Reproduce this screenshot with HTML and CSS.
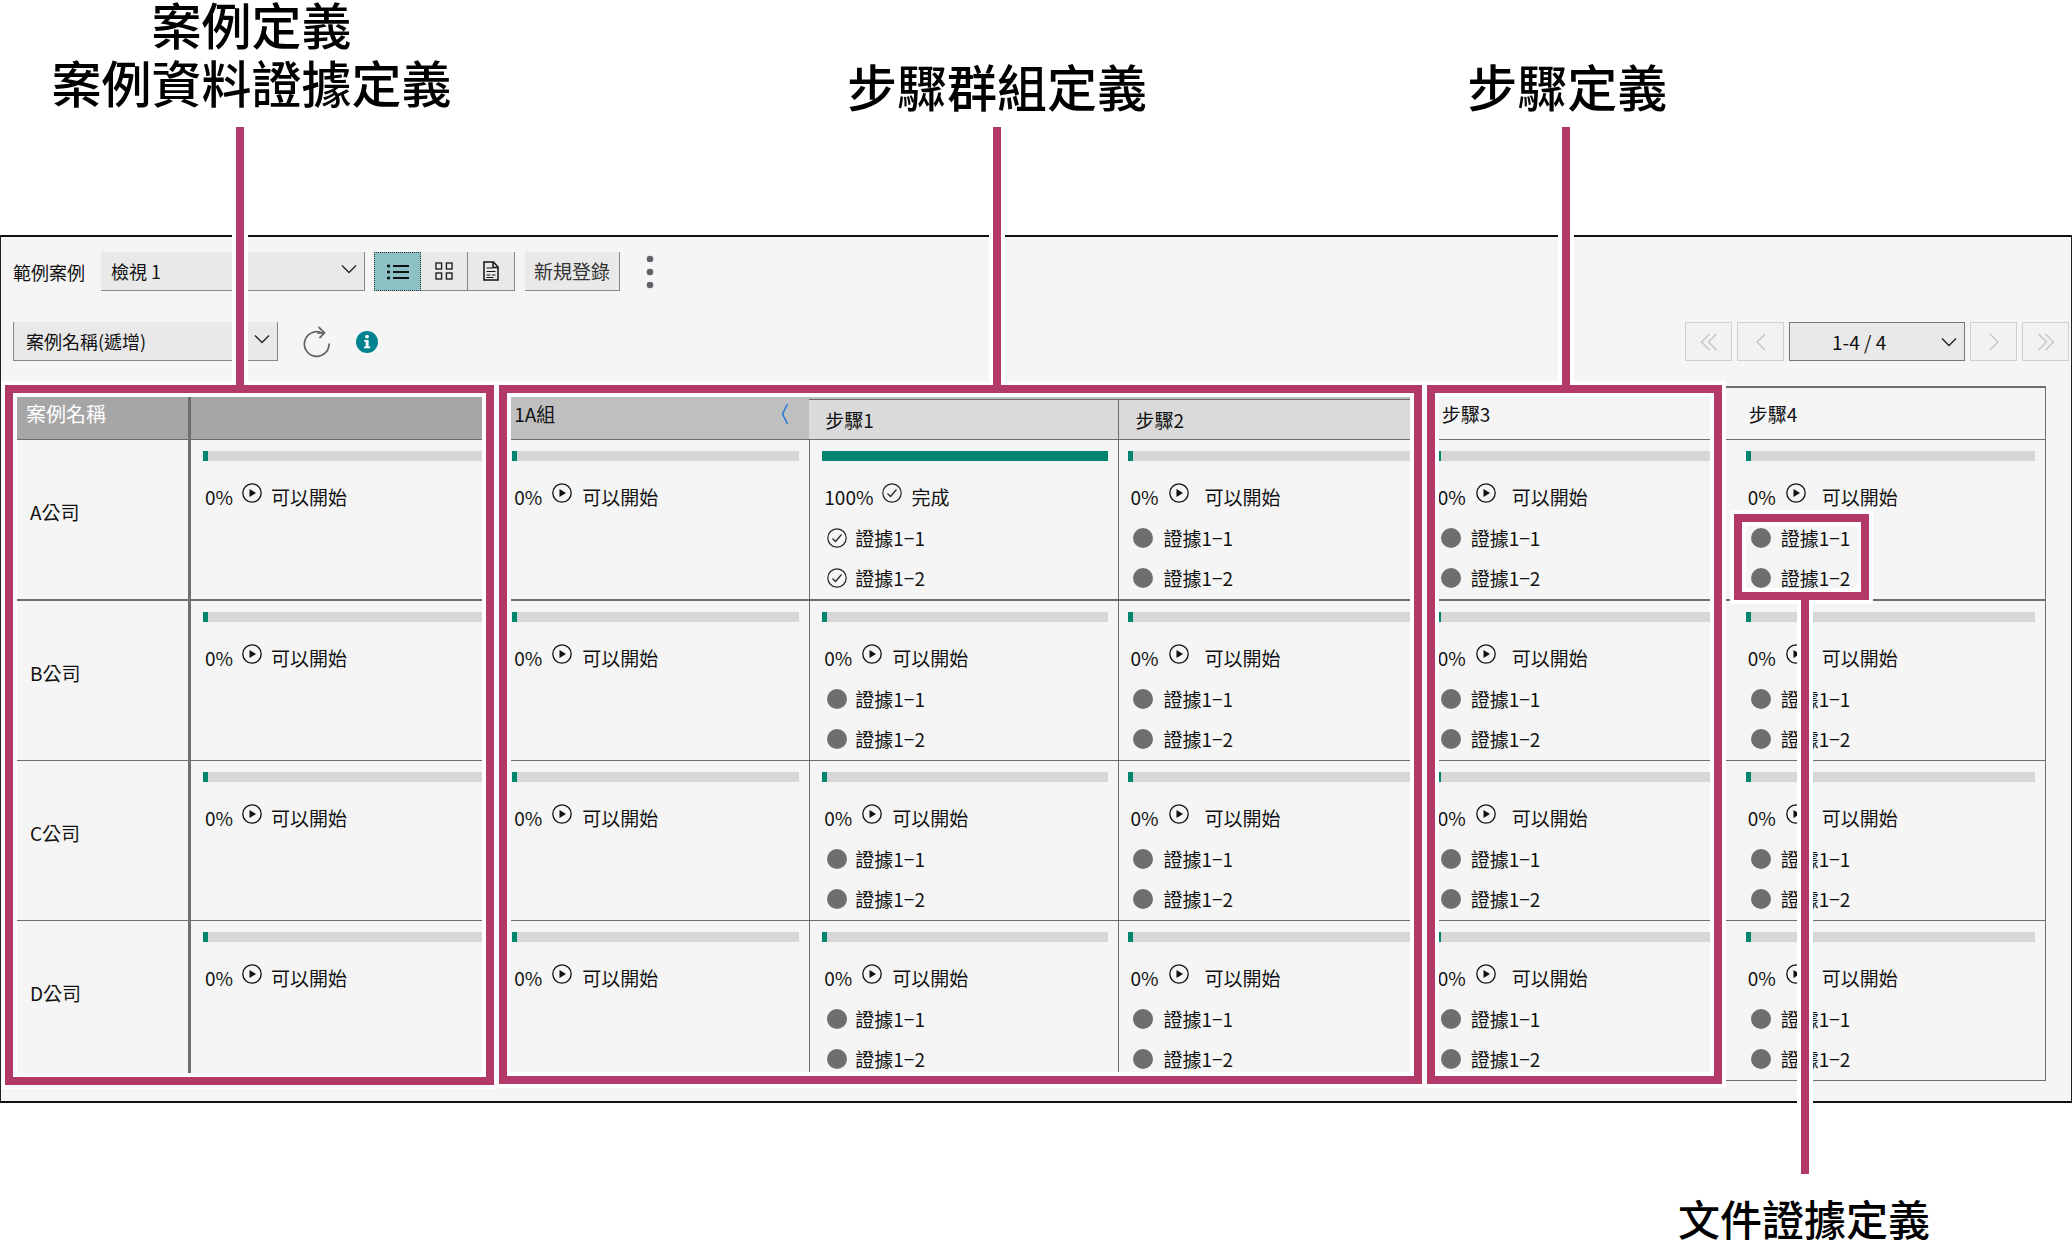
FILE: index.html
```html
<!DOCTYPE html>
<html lang="zh-Hant">
  <head>
    <meta charset="utf-8" />
    <meta name="viewport" content="width=device-width, initial-scale=1.0" />
    <title>範例案例</title>
    <link rel="stylesheet" href="styles.css">
  </head>
  <body>
    <!-- shared icons -->
    <svg class="sprite" aria-hidden="true">
      <symbol id="play" viewBox="0 0 20 20">
        <circle cx="10" cy="10" r="9.2" fill="none" stroke="#111" stroke-width="1.3"/>
        <path d="M7.5 6v8l6.5-4z" fill="#111"/>
      </symbol>
      <symbol id="check" viewBox="0 0 20 20">
        <circle cx="10" cy="10" r="9.2" fill="none" stroke="#222" stroke-width="1.2"/>
        <path d="M5.5 10.5l3 3 6-7" fill="none" stroke="#222" stroke-width="1.2"/>
      </symbol>
      <symbol id="dot" viewBox="0 0 20 20">
        <circle cx="10" cy="10" r="10" fill="#6e6e6e"/>
      </symbol>
      <symbol id="down" viewBox="0 0 16 10">
        <path d="M1 1.5l7 7 7-7" fill="none" stroke="#222" stroke-width="1.3"/>
      </symbol>
    </svg>

    <header class="labels">
      <div class="label label-case">案例定義<br>案例資料證據定義</div>
      <div class="label label-group">步驟群組定義</div>
      <div class="label label-step">步驟定義</div>
    </header>

    <main class="panel">
      <div class="toolbar">
        <label class="toolbar-label" for="view">範例案例</label>
        <div class="select select-view">
          <select id="view"><option>檢視 1</option></select>
          <svg class="arrow"><use href="#down"/></svg>
        </div>
        <div class="modes">
          <button class="mode active" type="button" aria-label="清單">
            <svg width="22" height="16" viewBox="0 0 22 16"><path d="M6 2h16M6 8h16M6 14h16" stroke="#111" stroke-width="1.8"/><path d="M0 2h3M0 8h3M0 14h3" stroke="#111" stroke-width="2.4"/></svg>
          </button>
          <button class="mode" type="button" aria-label="卡片">
            <svg width="18" height="18" viewBox="0 0 18 18" fill="none" stroke="#222" stroke-width="1.4"><rect x="1" y="1" width="5.6" height="6"/><rect x="11.4" y="1" width="5.6" height="6"/><rect x="1" y="11" width="5.6" height="6"/><rect x="11.4" y="11" width="5.6" height="6"/></svg>
          </button>
          <button class="mode" type="button" aria-label="報表">
            <svg width="16" height="20" viewBox="0 0 16 20" fill="none" stroke="#111" stroke-width="1.5"><path d="M1 1h9.500l4.500 5v13H1z"/><path d="M10 1v5.500h5"/><path d="M3.500 7h6M3.500 10.500h9M3.500 14h4M9 14h3.500M3.500 16.500h7" stroke-width="1.2"/></svg>
          </button>
        </div>
        <button class="create" type="button">新規登錄</button>
        <button class="more" type="button" aria-label="更多">
          <svg width="8" height="34" viewBox="0 0 8 34" fill="#5f6368"><circle cx="4" cy="4" r="3.300"/><circle cx="4" cy="17" r="3.300"/><circle cx="4" cy="30" r="3.300"/></svg>
        </button>
      </div>

      <div class="toolbar toolbar-sort">
        <div class="select select-sort">
          <select aria-label="排序"><option>案例名稱(遞增)</option></select>
          <svg class="arrow"><use href="#down"/></svg>
        </div>
        <button class="reload" type="button" aria-label="重新整理">
          <svg width="28" height="32" viewBox="0 0 28 32" fill="none" stroke="#666" stroke-width="1.8"><path d="M26 17.500A12.300 12.300 0 1 1 20 7.500"/><path d="M14.500 7l6.500-.3M15.500 1l6 5.700-5 5.500"/></svg>
        </button>
        <button class="info" type="button" aria-label="資訊">
          <svg width="22" height="22" viewBox="0 0 22 22"><circle cx="11" cy="11" r="11" fill="#00838f"/><circle cx="11" cy="5.600" r="1.900" fill="#fff"/><path d="M8.200 9h4.400v6.500h1.600v1.700H8v-1.700h1.700v-4.800H8.200z" fill="#fff"/></svg>
        </button>
        <nav class="pager">
          <button type="button" disabled aria-label="第一頁"><svg width="18" height="18" viewBox="0 0 18 18"><path d="M9.500 1l-8 8 8 8M16.500 1l-8 8 8 8"/></svg></button>
          <button type="button" disabled aria-label="上一頁"><svg width="18" height="18" viewBox="0 0 18 18"><path d="M13 1L5 9l8 8"/></svg></button>
          <div class="select select-page">
            <select aria-label="頁"><option>1-4 / 4</option></select>
            <svg class="arrow"><use href="#down"/></svg>
          </div>
          <button type="button" disabled aria-label="下一頁"><svg width="18" height="18" viewBox="0 0 18 18"><path d="M5 1l8 8-8 8"/></svg></button>
          <button type="button" disabled aria-label="最後一頁"><svg width="18" height="18" viewBox="0 0 18 18"><path d="M1.500 1l8 8-8 8M8.500 1l8 8-8 8"/></svg></button>
        </nav>
      </div>

      <div class="board">
        <table class="cases">
          <colgroup><col class="col-name"><col><col><col><col><col><col></colgroup>
          <thead>
            <tr class="group-row">
              <th class="dark name" rowspan="2">案例名稱</th>
              <th class="dark" rowspan="2"></th>
              <th class="mid" rowspan="2">
                <div class="group-head">1A組
                  <button class="collapse" type="button" aria-label="收合"><svg width="8" height="20" viewBox="0 0 8 20"><path d="M6.500 0L1.500 10l5 10" fill="none" stroke="#1a73d9" stroke-width="1.4"/></svg></button>
                </div>
              </th>
              <th class="mid" colspan="2"></th>
              <th class="step" rowspan="2">步驟3</th>
              <th class="step last" rowspan="2">步驟4</th>
            </tr>
            <tr class="step-row">
              <th class="light">步驟1</th>
              <th class="light line">步驟2</th>
            </tr>
          </thead>
          <tbody>
            <tr>
              <th class="name">A公司</th>
              <td>
                <div class="bar"><div class="fill" style="width:0%"></div></div>
                <div class="status near">0% <svg><use href="#play"/></svg> 可以開始</div>
              </td>
              <td>
                <div class="bar"><div class="fill" style="width:0%"></div></div>
                <div class="status">0% <svg><use href="#play"/></svg> 可以開始</div>
              </td>
              <td class="line">
                <div class="bar"><div class="fill" style="width:100%"></div></div>
                <div class="status done">100% <svg><use href="#check"/></svg> 完成</div>
                <ul class="docs near">
                  <li><svg><use href="#check"/></svg>證據1−1</li>
                  <li><svg><use href="#check"/></svg>證據1−2</li>
                </ul>
              </td>
              <td class="line step2">
                <div class="bar"><div class="fill" style="width:0%"></div></div>
                <div class="status wide">0% <svg><use href="#play"/></svg> 可以開始</div>
                <ul class="docs">
                  <li><svg><use href="#dot"/></svg>證據1−1</li>
                  <li><svg><use href="#dot"/></svg>證據1−2</li>
                </ul>
              </td>
              <td class="step3">
                <div class="bar"><div class="fill" style="width:0%"></div></div>
                <div class="status wide">0% <svg><use href="#play"/></svg> 可以開始</div>
                <ul class="docs">
                  <li><svg><use href="#dot"/></svg>證據1−1</li>
                  <li><svg><use href="#dot"/></svg>證據1−2</li>
                </ul>
              </td>
              <td class="last">
                <div class="bar"><div class="fill" style="width:0%"></div></div>
                <div class="status wide">0% <svg><use href="#play"/></svg> 可以開始</div>
                <ul class="docs">
                  <li><svg><use href="#dot"/></svg>證據1−1</li>
                  <li><svg><use href="#dot"/></svg>證據1−2</li>
                </ul>
              </td>
            </tr>
            <tr>
              <th class="name">B公司</th>
              <td>
                <div class="bar"><div class="fill" style="width:0%"></div></div>
                <div class="status near">0% <svg><use href="#play"/></svg> 可以開始</div>
              </td>
              <td>
                <div class="bar"><div class="fill" style="width:0%"></div></div>
                <div class="status">0% <svg><use href="#play"/></svg> 可以開始</div>
              </td>
              <td class="line">
                <div class="bar"><div class="fill" style="width:0%"></div></div>
                <div class="status">0% <svg><use href="#play"/></svg> 可以開始</div>
                <ul class="docs near">
                  <li><svg><use href="#dot"/></svg>證據1−1</li>
                  <li><svg><use href="#dot"/></svg>證據1−2</li>
                </ul>
              </td>
              <td class="line step2">
                <div class="bar"><div class="fill" style="width:0%"></div></div>
                <div class="status wide">0% <svg><use href="#play"/></svg> 可以開始</div>
                <ul class="docs">
                  <li><svg><use href="#dot"/></svg>證據1−1</li>
                  <li><svg><use href="#dot"/></svg>證據1−2</li>
                </ul>
              </td>
              <td class="step3">
                <div class="bar"><div class="fill" style="width:0%"></div></div>
                <div class="status wide">0% <svg><use href="#play"/></svg> 可以開始</div>
                <ul class="docs">
                  <li><svg><use href="#dot"/></svg>證據1−1</li>
                  <li><svg><use href="#dot"/></svg>證據1−2</li>
                </ul>
              </td>
              <td class="last">
                <div class="bar"><div class="fill" style="width:0%"></div></div>
                <div class="status wide">0% <svg><use href="#play"/></svg> 可以開始</div>
                <ul class="docs">
                  <li><svg><use href="#dot"/></svg>證據1−1</li>
                  <li><svg><use href="#dot"/></svg>證據1−2</li>
                </ul>
              </td>
            </tr>
            <tr>
              <th class="name">C公司</th>
              <td>
                <div class="bar"><div class="fill" style="width:0%"></div></div>
                <div class="status near">0% <svg><use href="#play"/></svg> 可以開始</div>
              </td>
              <td>
                <div class="bar"><div class="fill" style="width:0%"></div></div>
                <div class="status">0% <svg><use href="#play"/></svg> 可以開始</div>
              </td>
              <td class="line">
                <div class="bar"><div class="fill" style="width:0%"></div></div>
                <div class="status">0% <svg><use href="#play"/></svg> 可以開始</div>
                <ul class="docs near">
                  <li><svg><use href="#dot"/></svg>證據1−1</li>
                  <li><svg><use href="#dot"/></svg>證據1−2</li>
                </ul>
              </td>
              <td class="line step2">
                <div class="bar"><div class="fill" style="width:0%"></div></div>
                <div class="status wide">0% <svg><use href="#play"/></svg> 可以開始</div>
                <ul class="docs">
                  <li><svg><use href="#dot"/></svg>證據1−1</li>
                  <li><svg><use href="#dot"/></svg>證據1−2</li>
                </ul>
              </td>
              <td class="step3">
                <div class="bar"><div class="fill" style="width:0%"></div></div>
                <div class="status wide">0% <svg><use href="#play"/></svg> 可以開始</div>
                <ul class="docs">
                  <li><svg><use href="#dot"/></svg>證據1−1</li>
                  <li><svg><use href="#dot"/></svg>證據1−2</li>
                </ul>
              </td>
              <td class="last">
                <div class="bar"><div class="fill" style="width:0%"></div></div>
                <div class="status wide">0% <svg><use href="#play"/></svg> 可以開始</div>
                <ul class="docs">
                  <li><svg><use href="#dot"/></svg>證據1−1</li>
                  <li><svg><use href="#dot"/></svg>證據1−2</li>
                </ul>
              </td>
            </tr>
            <tr>
              <th class="name">D公司</th>
              <td>
                <div class="bar"><div class="fill" style="width:0%"></div></div>
                <div class="status near">0% <svg><use href="#play"/></svg> 可以開始</div>
              </td>
              <td>
                <div class="bar"><div class="fill" style="width:0%"></div></div>
                <div class="status">0% <svg><use href="#play"/></svg> 可以開始</div>
              </td>
              <td class="line">
                <div class="bar"><div class="fill" style="width:0%"></div></div>
                <div class="status">0% <svg><use href="#play"/></svg> 可以開始</div>
                <ul class="docs near">
                  <li><svg><use href="#dot"/></svg>證據1−1</li>
                  <li><svg><use href="#dot"/></svg>證據1−2</li>
                </ul>
              </td>
              <td class="line step2">
                <div class="bar"><div class="fill" style="width:0%"></div></div>
                <div class="status wide">0% <svg><use href="#play"/></svg> 可以開始</div>
                <ul class="docs">
                  <li><svg><use href="#dot"/></svg>證據1−1</li>
                  <li><svg><use href="#dot"/></svg>證據1−2</li>
                </ul>
              </td>
              <td class="step3">
                <div class="bar"><div class="fill" style="width:0%"></div></div>
                <div class="status wide">0% <svg><use href="#play"/></svg> 可以開始</div>
                <ul class="docs">
                  <li><svg><use href="#dot"/></svg>證據1−1</li>
                  <li><svg><use href="#dot"/></svg>證據1−2</li>
                </ul>
              </td>
              <td class="last">
                <div class="bar"><div class="fill" style="width:0%"></div></div>
                <div class="status wide">0% <svg><use href="#play"/></svg> 可以開始</div>
                <ul class="docs">
                  <li><svg><use href="#dot"/></svg>證據1−1</li>
                  <li><svg><use href="#dot"/></svg>證據1−2</li>
                </ul>
              </td>
            </tr>
          </tbody>
        </table>

        <!-- frames over the table, on the same columns -->
        <div class="callouts">
          <div class="callout callout-case"><span class="leader"></span></div>
          <div class="callout callout-group"><span class="leader"></span></div>
          <div class="callout callout-step"><span class="leader"></span></div>
          <div class="callout callout-doc"><span class="leader leader-down"></span></div>
        </div>
      </div>
    </main>

    <footer class="footer">
      <div class="label label-doc">文件證據定義</div>
    </footer>
  </body>
</html>
```
FILE: styles.css
```css
*{
  box-sizing: border-box;
}
body{
  --pink: #b33a68;
  --line: #6e6e6e;
  --columns: 174px repeat(6, 1fr);
  margin: 0;
  background: #fff;
  color: #111;
  font-family: "Noto Sans CJK TC", "Noto Sans", sans-serif;
  font-size: 19px;
  line-height: 28px;
}
button, select{
  font: inherit;
  color: inherit;
  border: 0;
  border-radius: 0;
  padding: 0;
  margin: 0;
  background: none;
}
.sprite{
  display: none;
}

/* labels */
.labels{
  display: grid;
  grid-template-columns: var(--columns);
  align-items: start;
  height: 235px;
  padding: 0 26px 0 17px;
}
.label{
  color: #000;
  font-size: 50px;
  font-weight: 500;
  line-height: 58px;
  text-align: center;
  white-space: nowrap;
}
.label-case{
  grid-column: 1 / 3;
  margin-top: -6px;
  padding-right: 14px;
}
.label-group{
  grid-column: 3 / 6;
  padding: 56px 0 0 66px;
}
.label-step{
  grid-column: 6;
  padding: 56px 30px 0 0;
}
.footer{
  display: flex;
  justify-content: flex-end;
  padding: 86px 142px 0 0;
}
.label-doc{
  font-size: 42px;
}

.panel{
  background: #f5f5f5;
  border: 1px solid #222;
  border-top: 2px solid #111;
  border-bottom: 2px solid #111;
  padding: 15px 0 20px;
}

/* toolbars */
.toolbar{
  display: flex;
  align-items: center;
  height: 39px;
  padding: 0 2px 0 12px;
}
.toolbar-sort{
  margin: 31px 0 25px;
}
.toolbar-label{
  width: 88px;
  font-size: 18px;
}
.select{
  position: relative;
  height: 39px;
}
.select select{
  appearance: none;
  width: 100%;
  height: 100%;
  padding-left: 10px;
  background: #e9e9e9;
  border-bottom: 1px solid #888;
  border-right: 1px solid #888;
  font-size: 18px;
}
.arrow{
  position: absolute;
  right: 8px;
  top: 12px;
  width: 16px;
  height: 10px;
  pointer-events: none;
}
.select-view{
  width: 264px;
}
.select-sort{
  width: 265px;
}
.select-sort select{
  border-left: 1px solid #888;
  padding-left: 12px;
}
.select-page{
  width: 176px;
}
.select-page select{
  border: 1px solid #777;
  padding-left: 42px;
  font-size: 19px;
}
.select-page .arrow{
  top: 15px;
}
.modes{
  display: flex;
  margin: 0 10px 0 9px;
}
.mode{
  display: flex;
  align-items: center;
  justify-content: center;
  width: 47px;
  height: 39px;
  background: #e9e9e9;
  border-bottom: 1px solid #888;
  border-right: 1px solid #888;
}
.mode.active{
  background: #8bc0c4;
  border: 1px dotted #333;
}
.create{
  width: 95px;
  height: 39px;
  background: #e9e9e9;
  border-bottom: 1px solid #888;
  border-right: 1px solid #888;
  color: #333;
}
.more{
  display: flex;
  margin-left: 26px;
}
.reload, .info{
  display: flex;
  margin-left: 25px;
}
.pager{
  display: flex;
  gap: 5px;
  margin-left: auto;
}
.pager button{
  display: flex;
  align-items: center;
  justify-content: center;
  width: 47px;
  height: 39px;
  background: #f2f2f2;
  border: 1px solid #d0d0d0;
}
.pager button path{
  fill: none;
  stroke: #c4c4c4;
  stroke-width: 1.4;
}

/* table */
.board{
  position: relative;
  margin: 0 25px 0 16px;
}
.cases{
  width: 100%;
  table-layout: fixed;
  border-collapse: separate;
  border-spacing: 0;
}
.col-name{
  width: 174px;
}
th{
  font-weight: 400;
  text-align: left;
}
thead th{
  padding: 0 0 0 14px;
  border-top: 2px solid var(--line);
  border-bottom: 1px solid var(--line);
}
.group-row{
  height: 14px;
}
.step-row{
  height: 40px;
}
.step-row th{
  border-top: 0;
}
.dark{
  background: #a6a6a6;
  color: #fff;
}
.mid{
  background: #bfbfbf;
}
.light{
  background: #dadada;
}
thead .light{
  padding-left: 16px;
}
thead .last{
  padding-left: 12px;
}
.name{
  padding: 0 0 16px 13px;
  border-right: 3px solid var(--line);
}
thead .name{
  padding: 0 0 0 9px;
  font-size: 20px;
}
.group-head{
  display: flex;
  align-items: center;
  justify-content: space-between;
  padding-right: 20px;
}
.collapse{
  display: flex;
}
td{
  height: 160px;
  padding: 11px 10px 7px 12px;
  vertical-align: top;
}
tbody th, td{
  border-bottom: 1px solid var(--line);
}
tbody tr:first-child > *{
  border-bottom-width: 2px;
}
.line{
  border-left: 1px solid var(--line);
}
td.step2, td.last{
  padding-left: 9px;
}
td.step3{
  padding-left: 8px;
  padding-right: 20px;
}
.last{
  border-right: 1px solid var(--line);
}
.bar{
  height: 10px;
  background: #d7d7d7;
}
.fill{
  height: 100%;
  min-width: 5px;
  background: #00866e;
}
.status{
  display: flex;
  gap: 10px;
  height: 28px;
  margin-top: 22px;
  padding-left: 2px;
}
.status svg, .docs svg{
  flex: none;
  width: 20px;
  height: 20px;
}
.status.near, .status.done{
  gap: 9px;
}
.status.wide svg{
  margin-right: 6px;
}
.docs{
  display: flex;
  flex-direction: column;
  gap: 12px;
  list-style: none;
  margin: 13px 0 0;
  padding: 0 0 0 5px;
}
.docs li{
  display: flex;
  align-items: center;
  gap: 10px;
}
.docs.near li{
  gap: 8px;
}

/* callouts */
.callouts{
  position: absolute;
  inset: 0;
  display: grid;
  grid-template-columns: var(--columns);
  grid-template-rows: 100%;
  pointer-events: none;
}
.callout{
  position: relative;
  grid-row: 1;
  border: 8px solid var(--pink);
  box-shadow: 0 0 0 4px #fff, inset 0 0 0 4px #fff;
}
.callout-case{
  grid-column: 1 / 3;
  margin: -1px 6px -4px -12px;
}
.callout-group{
  grid-column: 3 / 6;
  margin: -1px 6px -3px -1px;
}
.callout-step{
  grid-column: 6;
  margin: -1px 15px -3px -1px;
}
.callout-doc{
  grid-column: 7;
  width: 135px;
  height: 86px;
  margin: 128px 0 0 -3px;
}
.leader{
  position: absolute;
  bottom: calc(100% + 8px);
  left: calc(50% - 8px);
  width: 16px;
  height: 258px;
  background: var(--pink);
  border: solid #fff;
  border-width: 0 4px;
}
.callout-case .leader{
  left: calc(50% - 18px);
}
.callout-group .leader{
  left: calc(50% + 29px);
}
.callout-step .leader{
  left: calc(50% - 16px);
}
.callout-doc .leader{
  top: calc(100% + 8px);
  bottom: auto;
  left: calc(50% - 4px);
  height: 574px;
}
```
